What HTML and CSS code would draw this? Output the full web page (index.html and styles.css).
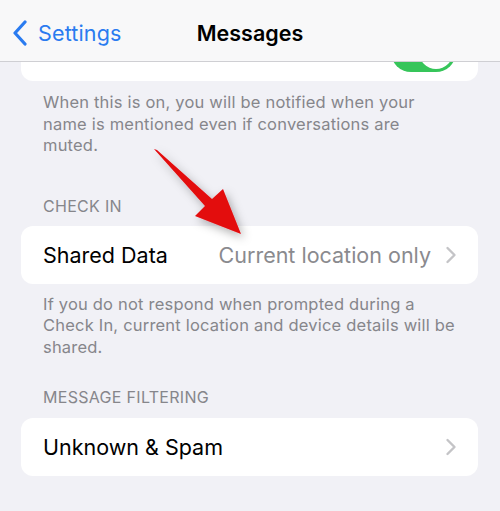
FILE: index.html
```html
<!DOCTYPE html>
<html>
<head>
<meta charset="utf-8">
<link rel="stylesheet" href="styles.css">
</head>
<body>
<div class="screen">
  <header class="nav">
    <div class="back">
      <svg class="chev" width="18" height="26" viewBox="0 0 18 26"><path d="M14 2 L4 13 L14 24" fill="none" stroke="#2a7bf0" stroke-width="3.2" stroke-linecap="round" stroke-linejoin="round"/></svg>
      <span class="back-label">Settings</span>
    </div>
    <div class="title">Messages</div>
  </header>

  <div class="card card-partial">
    <div class="toggle"><div class="knob"></div></div>
  </div>
  <p class="foot foot1">When this is on, you will be notified when your name is mentioned even if conversations are muted.</p>

  <div class="section-head head1">CHECK IN</div>
  <div class="card row">
    <span class="label">Shared Data</span>
    <span class="value">Current location only</span>
    <svg class="disc" width="12" height="18" viewBox="0 0 12 18"><path d="M2.5 2 L9.5 9 L2.5 16" fill="none" stroke="#c4c4c7" stroke-width="2.4" stroke-linecap="round" stroke-linejoin="round"/></svg>
  </div>
  <p class="foot foot2">If you do not respond when prompted during a Check In, current location and device details will be shared.</p>

  <div class="section-head head2">MESSAGE FILTERING</div>
  <div class="card row">
    <span class="label">Unknown &amp; Spam</span>
    <span class="value"></span>
    <svg class="disc" width="12" height="18" viewBox="0 0 12 18"><path d="M2.5 2 L9.5 9 L2.5 16" fill="none" stroke="#c4c4c7" stroke-width="2.4" stroke-linecap="round" stroke-linejoin="round"/></svg>
  </div>

  <svg class="arrow" width="500" height="511" viewBox="0 0 500 511">
    <defs>
      <filter id="sh" x="-30%" y="-30%" width="160%" height="160%">
        <feDropShadow dx="3" dy="4" stdDeviation="5" flood-color="#000" flood-opacity="0.3"/>
      </filter>
    </defs>
    <polygon points="154,149 157,150 212,199 223,189 241,234 195,216 205,206" fill="#e3090f" filter="url(#sh)"/>
  </svg>
</div>
</body>
</html>
```

FILE: styles.css
```css
* { box-sizing: border-box; }
html, body { margin: 0; padding: 0; }
body {
  background: #f1f1f6;
  font-family: Inter, "Noto Sans", sans-serif;
  width: 500px;
  height: 511px;
  overflow: hidden;
}
.screen {
  position: relative;
  width: 500px;
  height: 511px;
  background: #f1f1f6;
}
.nav {
  height: 62px;
  background: #f8f8f9;
  border-bottom: 1px solid #cfcfd3;
  display: flex;
  align-items: center;
  position: relative;
}
.back {
  display: flex;
  align-items: center;
  padding-left: 11px;
  gap: 9px;
  margin-top: 4px;
}
.back-label {
  color: #2a7bf0;
  font-size: 21.5px;
  letter-spacing: 0.15px;
}
.title {
  position: absolute;
  left: 0;
  right: 0;
  top: 20px;
  text-align: center;
  font-weight: 600;
  font-size: 21.5px;
  color: #000;
}
.card {
  background: #fff;
  border-radius: 12px;
  margin: 0 22px 0 21px;
}
.card-partial {
  height: 19px;
  border-radius: 0 0 12px 12px;
  overflow: hidden;
  position: relative;
}
.toggle {
  position: absolute;
  left: 370px;
  top: -30px;
  width: 65px;
  height: 40px;
  border-radius: 20px;
  background: #36c55a;
}
.knob {
  position: absolute;
  right: 3px;
  top: 3px;
  width: 34px;
  height: 34px;
  border-radius: 50%;
  background: #fff;
}
.foot {
  margin: 0;
  padding: 0 0 0 43px;
  width: 460px;
  font-size: 16.5px;
  letter-spacing: 0.2px;
  line-height: 21.5px;
  color: #86868b;
}
.foot1 { margin-top: 11px; width: 448px; }
.foot2 { margin-top: 10px; }
.section-head {
  padding-left: 43px;
  font-size: 16px;
  letter-spacing: 0.3px;
  line-height: 20px;
  color: #86868b;
}
.head1 { margin-top: 39px; margin-bottom: 10px; }
.head2 { margin-top: 29px; margin-bottom: 11px; }
.row {
  height: 58px;
  display: flex;
  align-items: center;
  padding: 0 21px 0 22px;
}
.label {
  font-size: 21.5px;
  color: #000;
}
.value {
  flex: 1;
  text-align: right;
  font-size: 21.5px;
  color: #8a8a8e;
  margin-right: 14px;
}
.disc { flex: none; }
.arrow {
  position: absolute;
  left: 0;
  top: 0;
  pointer-events: none;
}
```
